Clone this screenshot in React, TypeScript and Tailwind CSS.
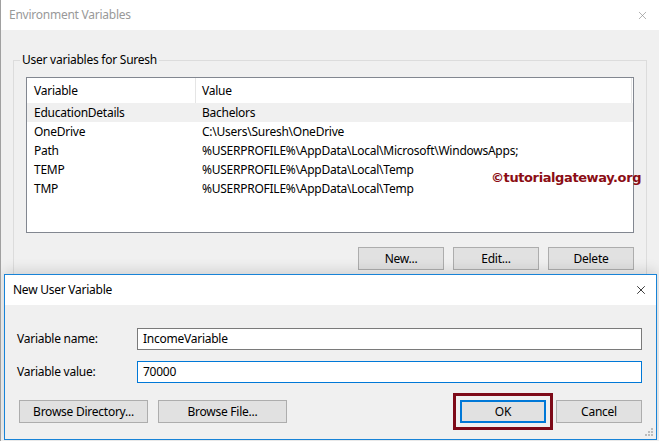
import { X } from "lucide-react";

const rows = [
  { name: "EducationDetails", value: "Bachelors", selected: true },
  { name: "OneDrive", value: "C:\\Users\\Suresh\\OneDrive" },
  { name: "Path", value: "%USERPROFILE%\\AppData\\Local\\Microsoft\\WindowsApps;" },
  { name: "TEMP", value: "%USERPROFILE%\\AppData\\Local\\Temp" },
  { name: "TMP", value: "%USERPROFILE%\\AppData\\Local\\Temp" },
];

function WinButton({ label, className = "" }: { label: string; className?: string }) {
  return (
    <button className={`h-[23px] bg-[#e1e1e1] border border-[#adadad] text-[12px] text-black flex items-center justify-center ${className}`}>
      {label}
    </button>
  );
}

function Grip() {
  return (
    <svg width="10" height="10" viewBox="0 0 10 10" className="absolute right-[3px] bottom-[3px]">
      {[
        [8, 0], [8, 3], [5, 3], [8, 6], [5, 6], [2, 6],
      ].map(([x, y], i) => (
        <rect key={i} x={x} y={y + 2} width="2" height="2" fill="#bcbcbc" />
      ))}
    </svg>
  );
}

export default function App() {
  return (
    <div
      className="relative w-[659px] h-[441px] overflow-hidden bg-[#f0f0f0] border-l border-[#a0a0a0] text-[12px] text-black tracking-[-0.25px]"
      style={{ fontFamily: '"Noto Sans", "Open Sans", sans-serif' }}
    >
      {/* Environment Variables window */}
      <div className="h-[30px] bg-white flex items-center justify-between pl-[8px] pr-[10px]">
        <span className="text-[#999999] text-[12px]">Environment Variables</span>
        <X className="w-[13px] h-[13px] text-[#8a8a8a]" strokeWidth={1.2} />
      </div>

      <div className="pt-[30px] pl-[12px] pr-[12px]">
        <div className="relative border border-[#dcdcdc] h-[240px] pt-[16px] px-[12px]">
          <span className="absolute -top-[9px] left-[6px] bg-[#f0f0f0] px-[2px] leading-[16px]">
            User variables for Suresh
          </span>

          {/* list */}
          <div className="relative h-[156px] bg-white border border-[#828790]">
            <div className="flex h-[25px] items-center">
              <div className="w-[169px] h-full flex items-center pl-[7px] border-r border-[#e5e5e5]">Variable</div>
              <div className="flex-1 h-full flex items-center pl-[6px] border-r border-[#e5e5e5] mr-[1px]">Value</div>
            </div>
            {rows.map((r) => (
              <div
                key={r.name}
                className={`flex h-[19px] items-center ${r.selected ? "bg-[#f0f0f0]" : ""}`}
              >
                <div className="w-[169px] pl-[7px]">{r.name}</div>
                <div className="pl-[6px]">{r.value}</div>
              </div>
            ))}
            <span
              className="absolute left-[464px] top-[91px] text-[#8b0d14] font-bold text-[13px] leading-[18px]"
              style={{ fontFamily: '"DejaVu Sans", Verdana, sans-serif', letterSpacing: "-0.4px" }}
            >
              ©tutorialgateway.org
            </span>
          </div>

          <div className="flex justify-end gap-[9px] mt-[14px] pr-[0px]">
            <WinButton label="New..." className="w-[86px]" />
            <WinButton label="Edit..." className="w-[86px]" />
            <WinButton label="Delete" className="w-[86px]" />
          </div>
        </div>
      </div>

      {/* New User Variable dialog */}
      <div className="absolute left-[3px] top-[274px] w-[653px] h-[166px] bg-[#f0f0f0] border border-[#1883d7] shadow-[0_-4px_12px_rgba(0,0,0,0.12)]">
        <div className="h-[30px] bg-white flex items-center justify-between pl-[8px] pr-[8px]">
          <span>New User Variable</span>
          <X className="w-[14px] h-[14px] text-black" strokeWidth={1.3} />
        </div>

        <div className="pl-[12px] pr-[14px] pt-[23px]">
          <div className="flex items-center h-[22px]">
            <span className="w-[120px]">Variable name:</span>
            <div className="flex-1 h-[22px] bg-white border border-[#7a7a7a] flex items-center pl-[5px]">
              IncomeVariable
            </div>
          </div>
          <div className="flex items-center h-[22px] mt-[11px]">
            <span className="w-[120px]">Variable value:</span>
            <div className="flex-1 h-[22px] bg-white border border-[#0078d7] flex items-center pl-[5px]">
              70000
            </div>
          </div>

          <div className="flex items-center mt-[17px] pl-[2px]">
            <WinButton label="Browse Directory..." className="w-[129px]" />
            <WinButton label="Browse File..." className="w-[129px] ml-[10px]" />
            <div className="flex-1" />
            <div className="border-[3px] border-[#7d0a18] p-[4px] -my-[8px] mr-[3px]">
              <button className="w-[86px] h-[23px] bg-[#e1e1e1] border-2 border-[#0078d7] text-[12px] flex items-center justify-center">
                OK
              </button>
            </div>
            <WinButton label="Cancel" className="w-[86px]" />
          </div>
        </div>
        <Grip />
      </div>
    </div>
  );
}
